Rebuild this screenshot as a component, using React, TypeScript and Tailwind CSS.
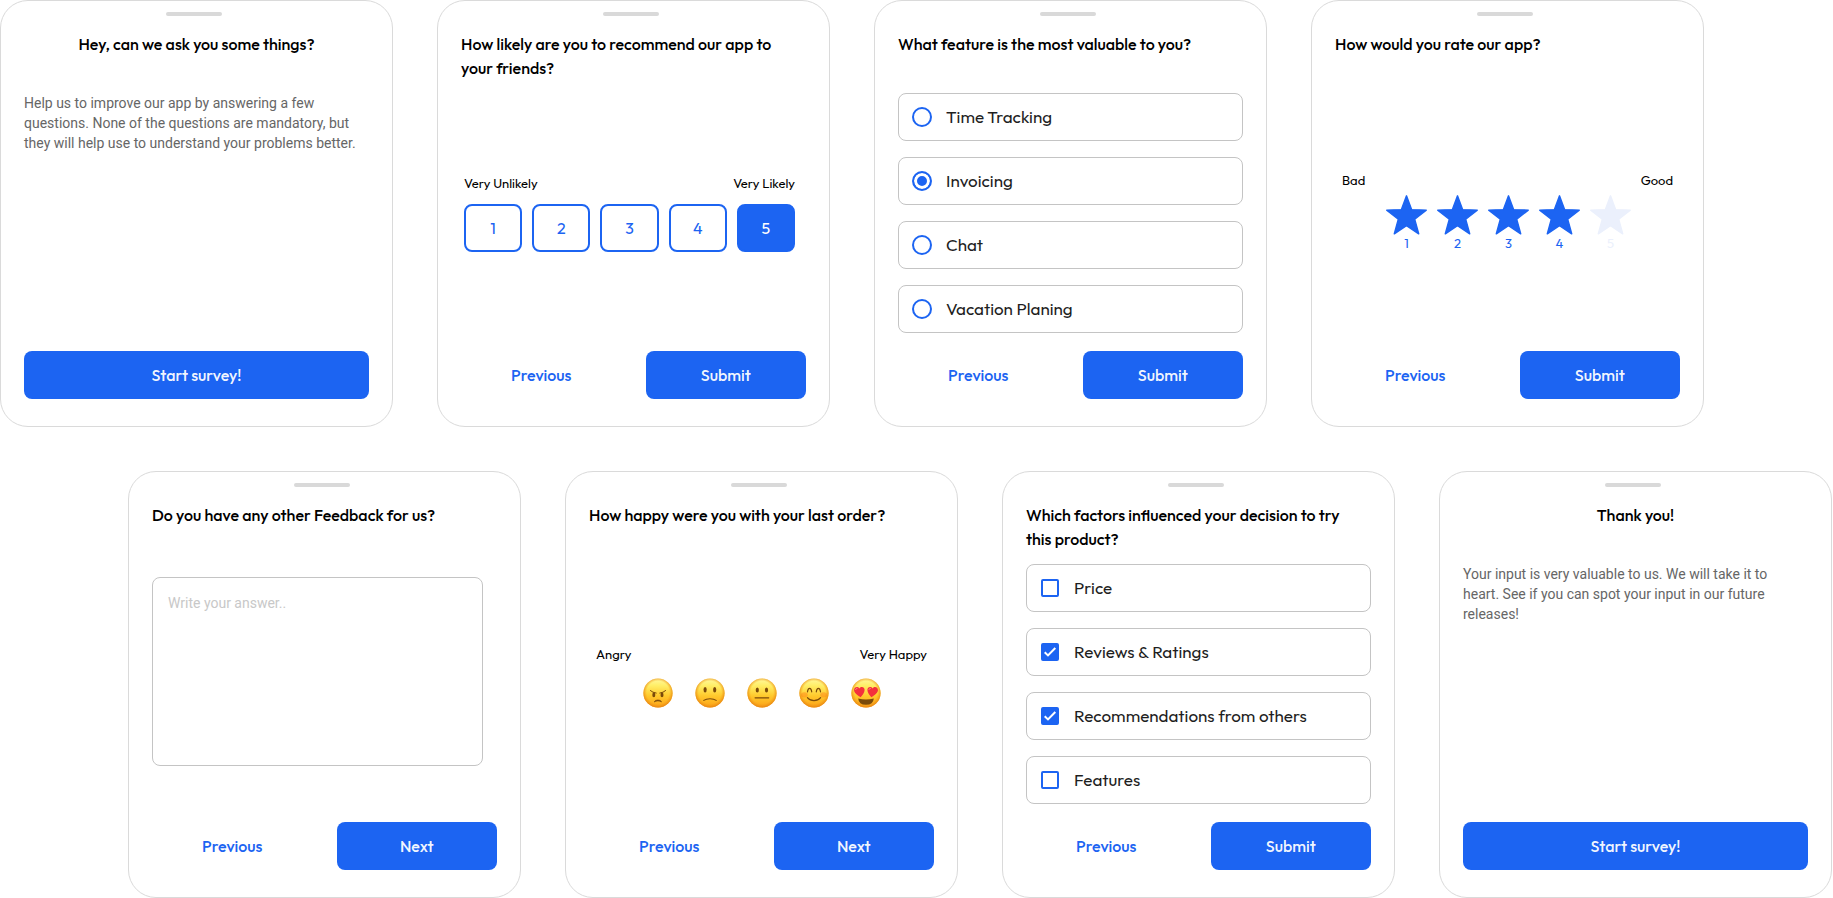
import { useId, useState, type ReactNode } from "react";

type CardProps = {
  title: string;
  centered?: boolean;
  children: ReactNode;
  footer: ReactNode;
};

function Card({ title, centered = false, children, footer }: CardProps) {
  return (
    <section className="flex min-w-0 flex-col rounded-[28px] border border-[#dadada] bg-white px-[23px] pt-[11px] pb-[27px]">
      <div className="flex justify-center pr-1.5">
        <div className="h-1 w-14 rounded-full bg-[#d9d9d9]" />
      </div>
      <h2
        className={
          centered
            ? "mt-4 min-h-12 text-center text-base leading-6 font-medium text-black"
            : "mt-4 min-h-12 pr-6 text-base leading-6 font-medium text-black"
        }
      >
        {title}
      </h2>
      <div className="mt-[13px] min-h-[240px] grow">{children}</div>
      <div className="mt-[18px]">{footer}</div>
    </section>
  );
}

function PrimaryButton({ label }: { label: string }) {
  return (
    <button
      type="button"
      className="h-12 w-full rounded-lg bg-[#1c64f2] text-base font-medium text-white/95"
    >
      {label}
    </button>
  );
}

function StepFooter({ action }: { action: string }) {
  return (
    <div className="grid grid-cols-2 gap-6">
      <button type="button" className="h-12 w-full rounded-lg text-base font-medium text-[#1c64f2]">
        Previous
      </button>
      <PrimaryButton label={action} />
    </div>
  );
}

function Message({ children }: { children: ReactNode }) {
  return (
    <p className="font-['Roboto',sans-serif] text-sm leading-5 text-[#666666]">{children}</p>
  );
}

function ScaleLabels({ low, high }: { low: string; high: string }) {
  return (
    <div className="flex justify-between text-[13px] leading-4 text-black">
      <span>{low}</span>
      <span>{high}</span>
    </div>
  );
}

function NumberScale() {
  const [value, setValue] = useState(5);
  return (
    <div className="pt-[82px] pr-[11px] pl-[3px]">
      <ScaleLabels low="Very Unlikely" high="Very Likely" />
      <div className="mt-[13px] grid grid-cols-5 gap-[10px]">
        {[1, 2, 3, 4, 5].map((n) => (
          <button
            key={n}
            type="button"
            aria-pressed={n === value}
            onClick={() => setValue(n)}
            className={
              n === value
                ? "h-12 rounded-lg border-2 border-[#1c64f2] bg-[#1c64f2] text-base text-white"
                : "h-12 rounded-lg border-2 border-[#1c64f2] bg-white text-base text-[#1c64f2]"
            }
          >
            {n}
          </button>
        ))}
      </div>
    </div>
  );
}

function StarRating() {
  const [value, setValue] = useState(4);
  return (
    <div className="px-[7px] pt-[79px]">
      <ScaleLabels low="Bad" high="Good" />
      <div className="mt-[7px] flex justify-center gap-[10px] pl-0.5">
        {[1, 2, 3, 4, 5].map((n) => (
          <button
            key={n}
            type="button"
            aria-pressed={n === value}
            onClick={() => setValue(n)}
            className={
              n <= value
                ? "flex w-[41px] flex-col items-center text-[#1c64f2]"
                : "flex w-[41px] flex-col items-center text-[#ebf0fc]"
            }
          >
            <svg viewBox="0 0 41 40" className="h-10 w-full" aria-hidden="true">
              <path
                d="M20.5 0.8 25.6 14.6 40.3 15.1 28.7 24.3 32.7 38.8 20.5 30.7 8.3 38.8 12.3 24.3 0.7 15.1 15.4 14.6Z"
                fill="currentColor"
                stroke="currentColor"
                strokeWidth="1.4"
                strokeLinejoin="round"
              />
            </svg>
            <span className="text-[13px] leading-4">{n}</span>
          </button>
        ))}
      </div>
    </div>
  );
}

type Mood = "angry" | "sad" | "neutral" | "happy" | "love";

const FEATURE = "#7a4a0a";

function MoodFeatures({ mood }: { mood: Mood }) {
  if (mood === "angry") {
    return (
      <>
        <path d="M7.4 12.6Q9.6 14.6 13.2 15.1M22.6 12.6Q20.4 14.6 16.8 15.1" stroke={FEATURE} strokeWidth="1" fill="none" strokeLinecap="round" />
        <ellipse cx="10.8" cy="16.9" rx="1.5" ry="2.4" fill={FEATURE} />
        <ellipse cx="19" cy="16.9" rx="1.5" ry="2.4" fill={FEATURE} />
        <path d="M11.2 24Q11.8 21.9 14.9 21.9Q18 21.9 18.6 24Q17 22.9 14.9 22.9Q12.8 22.9 11.2 24Z" fill={FEATURE} stroke={FEATURE} strokeWidth="0.6" strokeLinejoin="round" />
      </>
    );
  }
  if (mood === "sad") {
    return (
      <>
        <ellipse cx="10.1" cy="11.7" rx="1.6" ry="2.7" fill={FEATURE} />
        <ellipse cx="19.7" cy="11.7" rx="1.6" ry="2.7" fill={FEATURE} />
        <path d="M8.8 22.4Q11 20.7 15 20.7Q19 20.7 21.2 22.4" stroke={FEATURE} strokeWidth="1.1" fill="none" strokeLinecap="round" />
      </>
    );
  }
  if (mood === "neutral") {
    return (
      <>
        <ellipse cx="10.3" cy="12.1" rx="1.6" ry="2.5" fill={FEATURE} />
        <ellipse cx="19.5" cy="12.1" rx="1.6" ry="2.5" fill={FEATURE} />
        <path d="M8.1 19.8H21.7" stroke={FEATURE} strokeWidth="1.2" strokeLinecap="round" />
      </>
    );
  }
  if (mood === "happy") {
    return (
      <>
        <ellipse cx="5.4" cy="16.8" rx="3.4" ry="2.6" fill="#ff6a13" opacity="0.35" />
        <ellipse cx="24.6" cy="16.8" rx="3.4" ry="2.6" fill="#ff6a13" opacity="0.35" />
        <path d="M8.5 13.8Q8.9 10.3 10.6 10.3Q12.3 10.3 12.7 13.8M17.3 13.8Q17.7 10.3 19.4 10.3Q21.1 10.3 21.5 13.8" stroke={FEATURE} strokeWidth="1.2" fill="none" strokeLinecap="round" />
        <path d="M8.4 19.6Q11 22.7 15 22.7Q19 22.7 21.6 19.6" stroke={FEATURE} strokeWidth="1.2" fill="none" strokeLinecap="round" />
      </>
    );
  }
  return (
    <>
      <path d="M7.2 20.5Q15 22.3 22.8 20.5Q22.3 26.8 15 26.8Q7.7 26.8 7.2 20.5Z" fill={FEATURE} />
      <path d="M9.6 19.3C5.4 16.9 2.3 14.2 3.2 11.1C3.9 8.7 7 8.2 8.3 10.5C10.2 7.9 13.6 8.9 13.6 11.9C13.6 14.9 11.2 17.1 9.6 19.3Z" fill="#f4303c" />
      <path d="M20.4 19.3C24.6 16.9 27.7 14.2 26.8 11.1C26.1 8.7 23 8.2 21.7 10.5C19.8 7.9 16.4 8.9 16.4 11.9C16.4 14.9 18.8 17.1 20.4 19.3Z" fill="#f4303c" />
      <path d="M4.6 11.5Q5 10.3 6.1 10.3M17.9 11.5Q18.3 10.3 19.4 10.3" stroke="#ff8a8f" strokeWidth="0.9" fill="none" strokeLinecap="round" />
    </>
  );
}

function MoodFace({ mood }: { mood: Mood }) {
  const id = useId();
  return (
    <svg viewBox="0 0 30 30" className="size-[30px]" aria-hidden="true">
      <defs>
        <linearGradient id={`${id}-fill`} x1="0" y1="0" x2="0" y2="1">
          <stop offset="0" stopColor="#fff9a0" />
          <stop offset="0.25" stopColor="#ffee66" />
          <stop offset="0.6" stopColor="#ffc92c" />
          <stop offset="1" stopColor="#fca017" />
        </linearGradient>
        <radialGradient id={`${id}-rim`} cx="0.5" cy="0.48" r="0.52">
          <stop offset="0.74" stopColor="#f39a18" stopOpacity="0" />
          <stop offset="1" stopColor="#e58211" stopOpacity="0.9" />
        </radialGradient>
      </defs>
      <circle cx="15" cy="15" r="14.6" fill={`url(#${id}-fill)`} />
      <circle cx="15" cy="15" r="14.6" fill={`url(#${id}-rim)`} />
      <MoodFeatures mood={mood} />
    </svg>
  );
}

const MOODS: Mood[] = ["angry", "sad", "neutral", "happy", "love"];

function MoodScale() {
  const [mood, setMood] = useState<Mood | null>(null);
  return (
    <div className="px-[7px] pt-[82px]">
      <ScaleLabels low="Angry" high="Very Happy" />
      <div className="mt-4 flex justify-center gap-[22px]">
        {MOODS.map((option) => (
          <button
            key={option}
            type="button"
            aria-label={option}
            aria-pressed={option === mood}
            onClick={() => setMood(option)}
          >
            <MoodFace mood={option} />
          </button>
        ))}
      </div>
    </div>
  );
}

const OPTION_ROW =
  "flex h-12 cursor-pointer items-center rounded-lg border border-[#c4c4c4] text-[17px] leading-6 text-[#1f1f1f]";

function RadioOptions() {
  return (
    <div className="flex flex-col gap-4">
      {["Time Tracking", "Invoicing", "Chat", "Vacation Planing"].map((label) => (
        <label key={label} className={OPTION_ROW}>
          <input
            type="radio"
            name="feature"
            defaultChecked={label === "Invoicing"}
            className="mr-[14px] ml-[13px] size-5 shrink-0 appearance-none rounded-full border-2 border-[#1c64f2] bg-white checked:bg-[#1c64f2] checked:shadow-[inset_0_0_0_3px_white]"
          />
          {label}
        </label>
      ))}
    </div>
  );
}

function CheckOptions() {
  const checked = ["Reviews & Ratings", "Recommendations from others"];
  return (
    <div className="flex flex-col gap-4">
      {["Price", "Reviews & Ratings", "Recommendations from others", "Features"].map((label) => (
        <label key={label} className={OPTION_ROW}>
          <span className="mr-[15px] ml-[14px] grid size-[18px] shrink-0 place-items-center">
            <input
              type="checkbox"
              defaultChecked={checked.includes(label)}
              className="peer col-start-1 row-start-1 size-[18px] appearance-none rounded-xs border-2 border-[#1c64f2] bg-white checked:bg-[#1c64f2]"
            />
            <svg
              viewBox="0 0 18 18"
              className="pointer-events-none col-start-1 row-start-1 hidden size-[18px] peer-checked:block"
              aria-hidden="true"
            >
              <path d="M3.7 9.2 7 12.4 14.3 5" stroke="white" strokeWidth="2" fill="none" />
            </svg>
          </span>
          {label}
        </label>
      ))}
    </div>
  );
}

export default function App() {
  return (
    <main className="flex flex-col gap-11 bg-white font-['Outfit','Lato',sans-serif]">
      <div className="grid grid-cols-4 gap-x-11 pr-[129px]">
        <Card
          title="Hey, can we ask you some things?"
          centered
          footer={<PrimaryButton label="Start survey!" />}
        >
          <Message>
            Help us to improve our app by answering a few
            <br />
            questions. None of the questions are mandatory, but
            <br />
            they will help use to understand your problems better.
          </Message>
        </Card>
        <Card
          title="How likely are you to recommend our app to your friends?"
          footer={<StepFooter action="Submit" />}
        >
          <NumberScale />
        </Card>
        <Card
          title="What feature is the most valuable to you?"
          footer={<StepFooter action="Submit" />}
        >
          <RadioOptions />
        </Card>
        <Card title="How would you rate our app?" footer={<StepFooter action="Submit" />}>
          <StarRating />
        </Card>
      </div>
      <div className="grid grid-cols-4 gap-x-11 pr-px pl-32">
        <Card
          title="Do you have any other Feedback for us?"
          footer={<StepFooter action="Next" />}
        >
          <div className="pt-[13px] pr-[14px]">
            <textarea
              aria-label="Do you have any other Feedback for us?"
              placeholder="Write your answer.."
              className="block h-[189px] w-full resize-none rounded-lg border border-[#c4c4c4] p-[15px] font-['Roboto',sans-serif] text-sm leading-5 text-[#1f1f1f] placeholder:text-[#c8c8c8]"
            />
          </div>
        </Card>
        <Card
          title="How happy were you with your last order?"
          footer={<StepFooter action="Next" />}
        >
          <MoodScale />
        </Card>
        <Card
          title="Which factors influenced your decision to try this product?"
          footer={<StepFooter action="Submit" />}
        >
          <CheckOptions />
        </Card>
        <Card title="Thank you!" centered footer={<PrimaryButton label="Start survey!" />}>
          <Message>
            Your input is very valuable to us. We will take it to
            <br />
            heart. See if you can spot your input in our future
            <br />
            releases!
          </Message>
        </Card>
      </div>
    </main>
  );
}
